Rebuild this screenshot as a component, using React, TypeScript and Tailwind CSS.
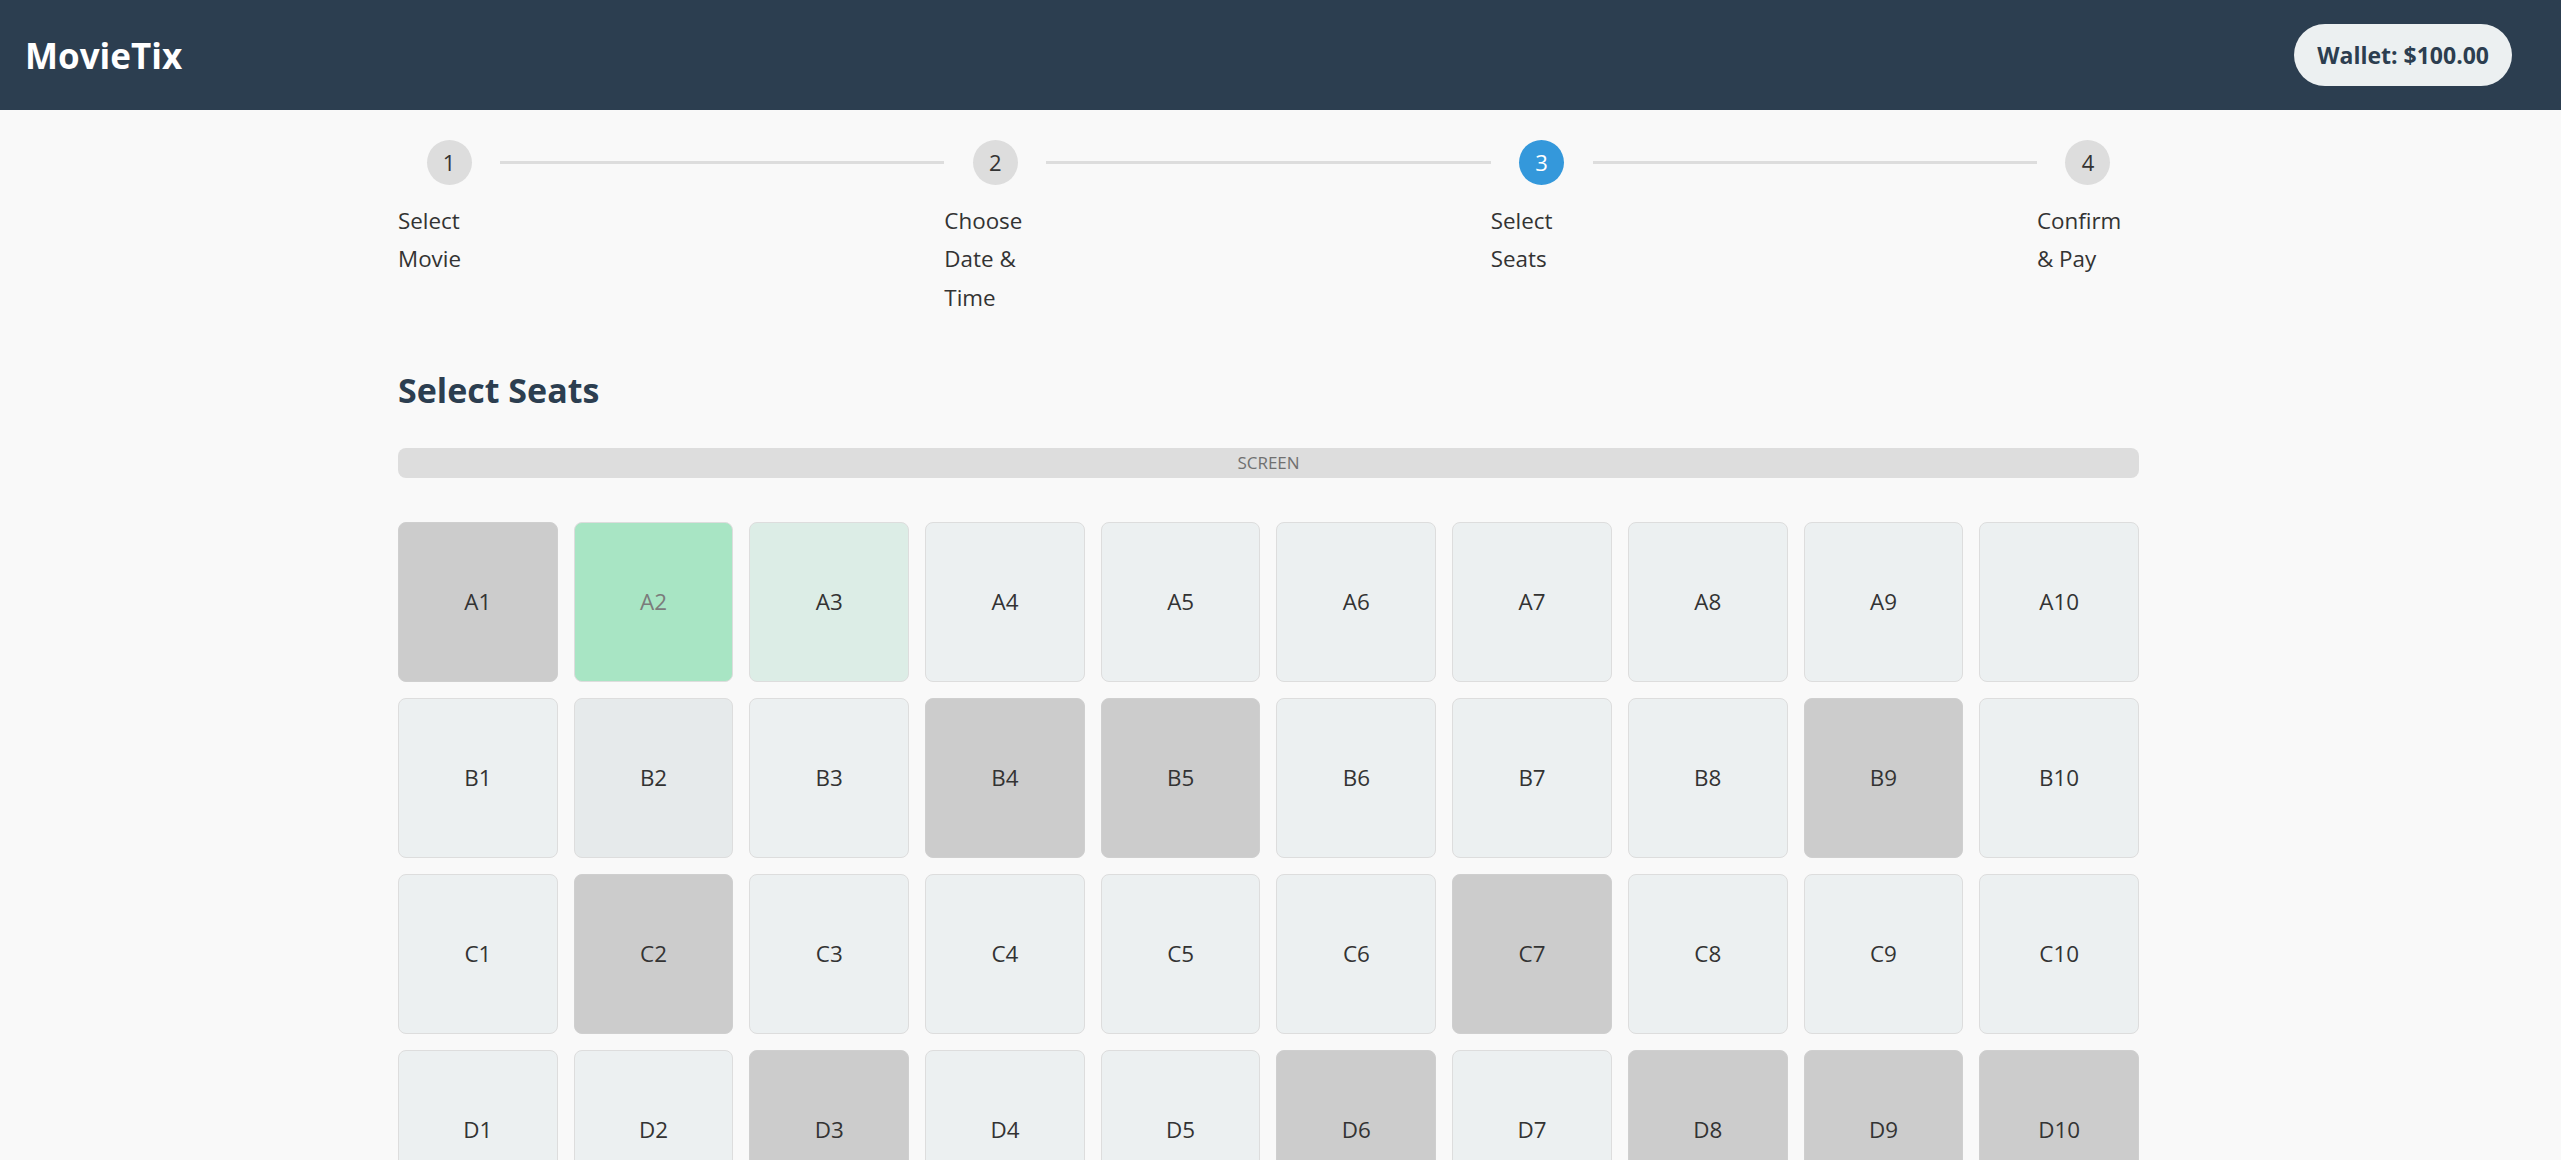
import React from "react";

type SeatState = "free" | "taken" | "selected" | "hover" | "focus";

const rows = ["A", "B", "C", "D", "E", "F", "G", "H"];
const taken: Record<string, number[]> = {
  A: [1],
  B: [4, 5, 9],
  C: [2, 7],
  D: [3, 6, 8, 9, 10],
  E: [1, 5, 6],
  F: [3, 8],
  G: [2, 4, 10],
  H: [6, 7],
};

function stateOf(row: string, n: number): SeatState {
  const id = row + n;
  if (id === "A2") return "selected";
  if (id === "A3") return "hover";
  if (id === "B2") return "focus";
  if (taken[row]?.includes(n)) return "taken";
  return "free";
}

const seatClass: Record<SeatState, string> = {
  free: "bg-[#ecf0f1] text-[#333333] border-[#dddddd]",
  taken: "bg-[#cccccc] text-[#333333] border-[#cfcfcf]",
  selected: "bg-[#a8e5c4] text-[#7b7b7b] border-[#dddddd]",
  hover: "bg-[#dcede6] text-[#333333] border-[#dddddd]",
  focus: "bg-[#e6eaeb] text-[#333333] border-[#dddddd]",
};

const steps = [
  { n: 1, label: "Select Movie" },
  { n: 2, label: "Choose Date & Time" },
  { n: 3, label: "Select Seats", active: true },
  { n: 4, label: "Confirm & Pay" },
];

export default function App() {
  return (
    <div className="min-h-screen bg-[#f9f9f9] font-['Open_Sans',sans-serif] text-[#333333]">
      <header className="flex h-[110px] items-center justify-between bg-[#2c3e50] pl-[25px] pr-[49px]">
        <h1 className="text-[35px] font-bold leading-none text-white">MovieTix</h1>
        <div className="flex h-[62px] items-center rounded-full bg-[#ecf0f1] px-[23px] text-[23px] font-bold text-[#2c3e50]">
          Wallet: $100.00
        </div>
      </header>

      <main className="ml-[398px] w-[1741px] pb-[60px] pt-[30px]">
        <div className="flex items-start">
          {steps.map((s, i) => (
            <React.Fragment key={s.n}>
              <div className="flex w-[102px] shrink-0 flex-col">
                <div
                  className={
                    s.active
                      ? "mx-auto flex h-[45px] w-[45px] items-center justify-center rounded-full bg-[#3498db] text-[22px] text-white"
                      : "mx-auto flex h-[45px] w-[45px] items-center justify-center rounded-full bg-[#dddddd] text-[22px] text-[#333333]"
                  }
                >
                  {s.n}
                </div>
                <div className="mt-[17px] text-[22.4px] leading-[38.4px] text-[#333333]">{s.label}</div>
              </div>
              {i < steps.length - 1 && <div className="mt-[21px] h-[3px] flex-1 bg-[#dddddd]" />}
            </React.Fragment>
          ))}
        </div>

        <h2 className="mt-[53px] text-[34px] font-bold leading-[40px] text-[#2c3e50]">Select Seats</h2>

        <div className="mt-[38px] flex h-[30px] items-center justify-center rounded-[8px] bg-[#dddddd] text-[17px] text-[#707070]">
          SCREEN
        </div>

        <div className="mt-[44px] grid grid-cols-10 gap-[16px]">
          {rows.flatMap((r) =>
            Array.from({ length: 10 }, (_, k) => {
              const n = k + 1;
              const st = stateOf(r, n);
              return (
                <div
                  key={r + n}
                  className={`flex h-[160px] items-center justify-center rounded-[8px] border text-[22.4px] ${seatClass[st]}`}
                >
                  {r}
                  {n}
                </div>
              );
            })
          )}
        </div>
      </main>
    </div>
  );
}
